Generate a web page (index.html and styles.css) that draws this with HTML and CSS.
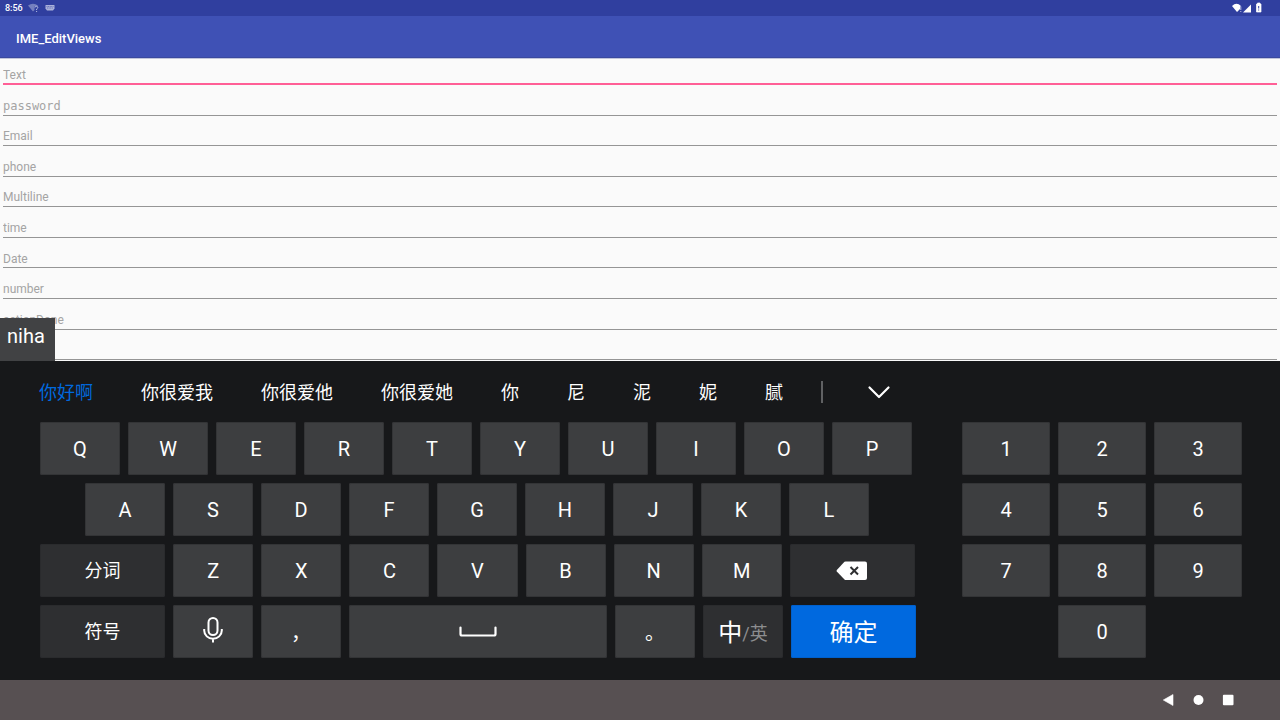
FILE: index.html
```html
<!DOCTYPE html>
<html lang="zh-CN">
<head>
<meta charset="utf-8">
<meta name="viewport" content="width=device-width, initial-scale=1">
<title>IME_EditViews</title>
<link rel="stylesheet" href="styles.css">
</head>
<body>
<div class="status-bar">
  <span class="clock">8:56</span>
  <svg class="status-icon dim" width="12" height="10" viewBox="0 0 12 10" aria-hidden="true"><path d="M0 2.500Q5 -1 10 2.500L9 3.500H6.500V7L5 8.500Z" fill="#7580bf"/><path d="M7 4.500Q7.200 3.300 8.500 3.300T9.800 4.700Q9.600 5.400 8.600 6V7M8.600 8V9" fill="none" stroke="#b5bbe0" stroke-width="1"/></svg>
  <svg class="status-icon keyboard-icon" width="10" height="8" viewBox="0 0 10 8" aria-hidden="true"><path d="M1 1H9Q9.500 1 9.500 1.500V4.500L8 6.500H2L.5 4.500V1.500Q.5 1 1 1Z" fill="#aab1da"/><path d="M1.500 2.500H8.500M2 4H8" stroke="#4b59ae" stroke-width=".7" stroke-dasharray="1 .6"/></svg>
  <span class="spacer"></span>
  <svg class="system-icons" width="32" height="12" viewBox="0 0 32 12" aria-hidden="true"><path d="M0 4Q4.500 -.5 9 4L8 5V7L5 10Z" fill="#fff"/><path d="M8.800 4.500V8M8.800 9V10" stroke="#bcc2e5" stroke-width="1"/><path d="M11 10.500L19 2.500V10.500Z" fill="#fff"/><path d="M24.500 2H25.500V1H28V2H29V10H24.500Z" fill="#fff" stroke="#fff" stroke-width=".7"/><path d="M26.700 4V6.500M26.700 7.500V8.500" stroke="#303f9f" stroke-width="1"/></svg>
</div>
<header class="app-bar"><h1 class="app-title">IME_EditViews</h1></header>
<main class="form">
  <input class="field focused" type="text" placeholder="Text" aria-label="Text">
  <input class="field password" type="password" placeholder="password" aria-label="password">
  <input class="field" type="email" placeholder="Email" aria-label="Email">
  <input class="field" type="tel" placeholder="phone" aria-label="phone">
  <input class="field" type="text" placeholder="Multiline" aria-label="Multiline">
  <input class="field" type="text" placeholder="time" aria-label="time">
  <input class="field" type="text" placeholder="Date" aria-label="Date">
  <input class="field" type="text" inputmode="numeric" placeholder="number" aria-label="number">
  <input class="field" type="text" enterkeyhint="done" placeholder="actionDone" aria-label="actionDone">
  <input class="field" type="text" aria-label="more">
</main>
<section class="keyboard" aria-label="keyboard">
  <div class="composing">niha</div>
  <div class="candidates">
    <button class="candidate selected">你好啊</button>
    <button class="candidate">你很爱我</button>
    <button class="candidate">你很爱他</button>
    <button class="candidate">你很爱她</button>
    <button class="candidate">你</button>
    <button class="candidate">尼</button>
    <button class="candidate">泥</button>
    <button class="candidate">妮</button>
    <button class="candidate">腻</button>
    <span class="divider"></span>
    <button class="candidate expand" aria-label="expand"><svg width="24" height="16" viewBox="0 0 24 16"><path d="M2.500 2.500L12 12L21.500 2.500" fill="none" stroke="#fff" stroke-width="2.200" stroke-linecap="round" stroke-linejoin="round"/></svg></button>
  </div>
  <div class="pads">
    <div class="letters">
      <div class="row row-top">
        <button class="key">Q</button><button class="key">W</button><button class="key">E</button><button class="key">R</button><button class="key">T</button><button class="key">Y</button><button class="key">U</button><button class="key">I</button><button class="key">O</button><button class="key">P</button>
      </div>
      <div class="row row-home">
        <button class="key">A</button><button class="key">S</button><button class="key">D</button><button class="key">F</button><button class="key">G</button><button class="key">H</button><button class="key">J</button><button class="key">K</button><button class="key">L</button>
      </div>
      <div class="row row-lower">
        <button class="key wide dark hanzi">分词</button><button class="key">Z</button><button class="key">X</button><button class="key">C</button><button class="key">V</button><button class="key">B</button><button class="key">N</button><button class="key">M</button>
        <button class="key wide dark" aria-label="delete"><svg width="32" height="20" viewBox="0 0 32 20"><path d="M8.500 .8Q9 .5 9.700 .5H29Q31 .5 31 2.500V17Q31 19 29 19H9.700Q9 19 8.500 18.500L.8 10.500Q.3 9.700 .8 9Z" fill="#fff"/><path d="M14.500 6L22 13.500M22 6L14.500 13.500" stroke="#2e2f31" stroke-width="2"/></svg></button>
      </div>
      <div class="row">
        <button class="key wide dark hanzi">符号</button>
        <button class="key hanzi" aria-label="voice"><svg width="20" height="28" viewBox="0 0 20 28"><rect x="5.500" y="2" width="9" height="17" rx="4.500" fill="none" stroke="#fff" stroke-width="2"/><path d="M1.200 13V14.500A8.800 8.300 0 0 0 18.800 14.500V13M10 22.500V26.500" fill="none" stroke="#fff" stroke-width="2"/></svg></button>
        <button class="key">，</button>
        <button class="key space" aria-label="space"><svg width="38" height="12" viewBox="0 0 38 12"><path d="M1.500 1.500V8Q1.500 9.500 3 9.500H35Q36.500 9.500 36.500 8V1.500" fill="none" stroke="#fff" stroke-width="2.200" stroke-linecap="round"/></svg></button>
        <button class="key">。</button>
        <button class="key dark hanzi language"><span>中</span><span class="alternate">/英</span></button>
        <button class="key wide hanzi confirm">确定</button>
      </div>
    </div>
    <div class="numbers">
      <button class="key">1</button><button class="key">2</button><button class="key">3</button>
      <button class="key">4</button><button class="key">5</button><button class="key">6</button>
      <button class="key">7</button><button class="key">8</button><button class="key">9</button>
      <button class="key zero">0</button>
    </div>
  </div>
</section>
<nav class="nav-bar" aria-label="system">
  <button class="nav-button" aria-label="back"><svg width="12" height="12" viewBox="0 0 12 12"><path d="M1.300 6L11 .5V11.500Z" fill="#fff" stroke="#fff" stroke-width=".6" stroke-linejoin="round"/></svg></button>
  <button class="nav-button" aria-label="home"><svg width="12" height="12" viewBox="0 0 12 12"><circle cx="6.500" cy="6" r="5" fill="#fff"/></svg></button>
  <button class="nav-button" aria-label="recent"><svg width="12" height="12" viewBox="0 0 12 12"><rect x=".9" y=".7" width="10.600" height="10.600" rx="1" fill="#fff"/></svg></button>
</nav>
</body>
</html>
```

FILE: styles.css
```css
* { box-sizing: border-box; }

body {
  margin: 0;
  min-height: 100vh;
  display: flex;
  flex-direction: column;
  background: #fafafa;
  font-family: Roboto, "Noto Sans CJK SC", sans-serif;
}

button {
  border: 0;
  padding: 0;
  background: none;
  color: #fff;
  font-family: inherit;
}

svg { display: block; flex: none; }

.status-bar {
  height: 16px;
  display: flex;
  align-items: center;
  padding: 0 16px 0 5px;
  background: #303f9f;
  color: #fff;
}
.clock { font-size: 9px; font-weight: 500; line-height: 16px; }
.status-icon { margin-left: 5px; }
.spacer { flex: 1; }

.app-bar {
  height: 42px;
  display: flex;
  align-items: center;
  padding: 3px 16px 0;
  background: #3f51b5;
  border-bottom: 1px solid #3a499f;
}
.app-title { margin: 0; color: #fff; font-size: 13px; font-weight: 500; }

.form {
  flex: 1;
  display: flex;
  flex-direction: column;
  padding: 0 3px 1px;
  border-top: 1px solid #c0c4dc;
}
.field {
  flex: 1 1 0;
  min-height: 26px;
  width: 100%;
  border: 0;
  border-bottom: 1px solid #959595;
  border-radius: 0;
  padding: 12px 0 0;
  background: none;
  color: #212121;
  font-family: Roboto, "Noto Sans CJK SC", sans-serif;
  font-size: 12px;
  outline: 0;
}
.field::placeholder { color: #a4a4a4; opacity: 1; }
.focused {
  flex: 0 0 26px;
  padding-top: 8px;
  border-bottom: 2px solid #ff5f96;
}
.password { font-family: "DejaVu Sans Mono", monospace; }

.keyboard {
  position: relative;
  padding: 0 38px 22px 39px;
  background: #17181a;
}
.composing {
  position: absolute;
  left: 0;
  bottom: 100%;
  height: 43px;
  padding: 0 10px 0 7px;
  background: #414244;
  color: #fff;
  font-size: 20px;
  line-height: 36px;
}

.candidates {
  height: 61px;
  display: flex;
  align-items: center;
  gap: 48px;
}
.candidate { padding-top: 2px; font-size: 18px; line-height: 24px; white-space: nowrap; }
.selected { color: #0069df; }
.divider { width: 2px; height: 22px; margin: 0 -4px 0 -10px; background: #606163; }

.pads { display: flex; gap: 46px; padding-left: 1px; }
.letters {
  flex: 876 1 0;
  display: flex;
  flex-direction: column;
  gap: 8px;
}
.row { display: flex; gap: 8px; }
.row-top { padding-right: 4px; }
.row-home { padding: 0 47px 0 45px; }
.row-lower { padding-right: 1px; }
.key {
  flex: 80 1 0;
  min-width: 0;
  height: 53px;
  display: flex;
  align-items: center;
  justify-content: center;
  border-radius: 2px;
  background: #3d3e40;
  box-shadow: inset 0 0 0 1px #333436;
  font-size: 20px;
}
.wide { flex-grow: 125; font-size: 18px; }
.space { flex-grow: 258; }
.dark { background: #2e2f31; box-shadow: inset 0 0 0 1px #2a2b2d; }
.hanzi { padding-bottom: 3px; }
.language { font-size: 24px; }
.alternate { color: #8c8d8f; font-size: 18px; padding-top: 4px; }
.confirm { background: #0069df; box-shadow: inset 0 0 0 1px #0060cc; font-size: 24px; }

.numbers {
  flex: 280 1 0;
  display: grid;
  grid-template-columns: repeat(3, 1fr);
  gap: 8px;
}
.zero { grid-column: 2; }

.nav-bar {
  height: 40px;
  display: flex;
  align-items: center;
  justify-content: flex-end;
  gap: 18px;
  padding-right: 46px;
  background: #575052;
}
```
